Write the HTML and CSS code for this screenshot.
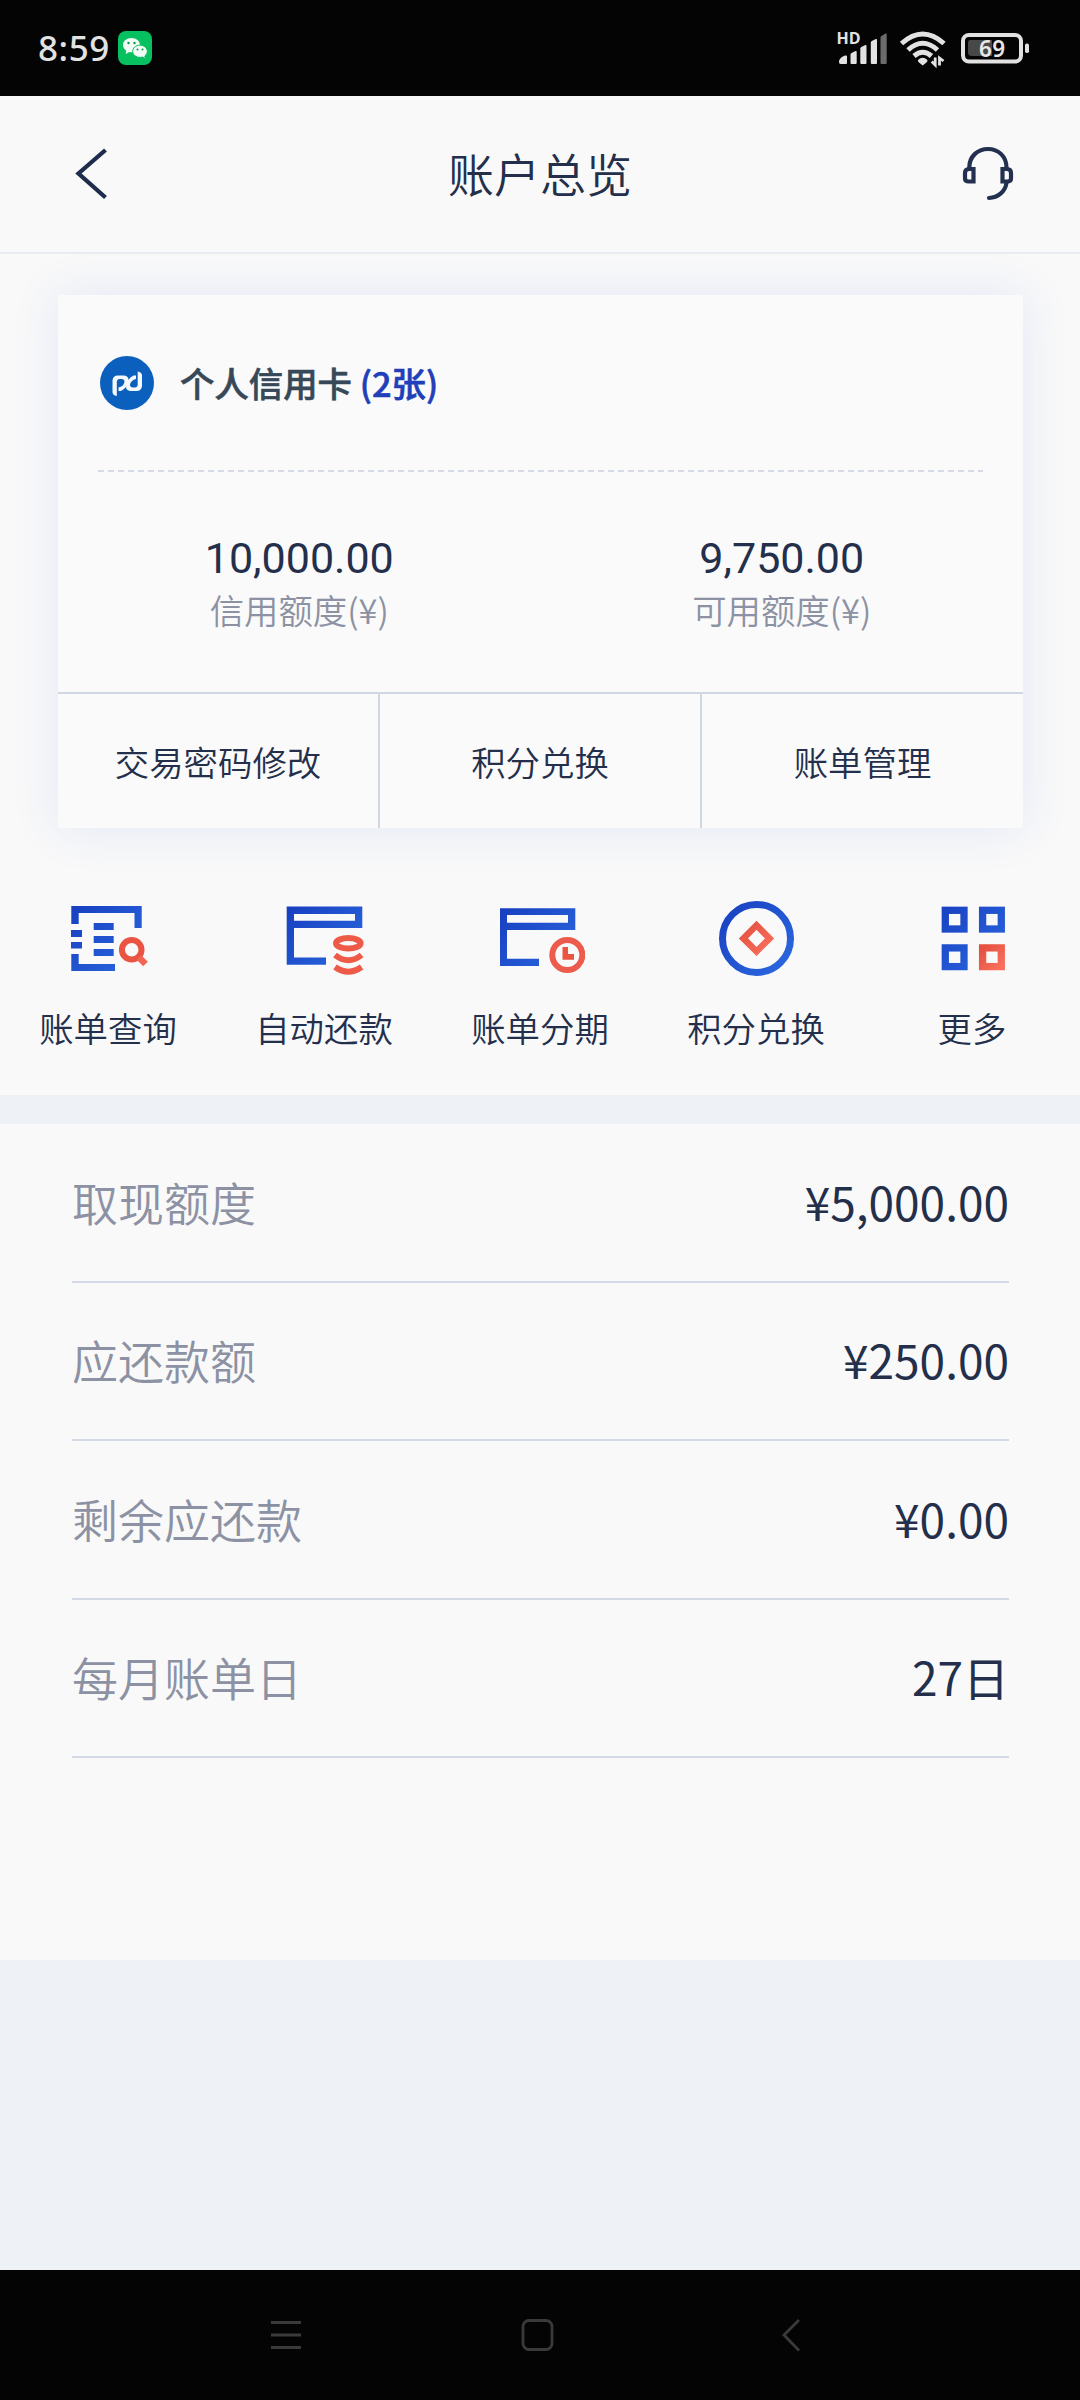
FILE: index.html
```html
<!DOCTYPE html>
<html lang="zh-CN">
<head>
<meta charset="utf-8">
<title>账户总览</title>
<link rel="stylesheet" href="styles.css">
</head>
<body>
<div class="screen">
  <div class="status">
    <div class="status-left">
      <span class="time">8:59</span>
      <svg class="wechat" viewBox="0 0 34 34">
        <rect width="34" height="34" rx="8" fill="#07c160"/>
        <path d="M13.500 7C8.700 7 5 10 5 14c0 2.300 1.200 4.200 3.200 5.500L7.800 23l3.500-2c.7.2 1.500.3 2.200.3 4.700 0 8.500-3.200 8.500-7.200S18.200 7 13.500 7z" fill="#f3fbf6"/>
        <path d="M22 14.200c-4.100 0-7.300 2.700-7.300 6.100s3.200 6.100 7.300 6.100c.9 0 1.700-.1 2.500-.4l3 1.800-.7-2.900c1.600-1.200 2.500-2.800 2.500-4.600 0-3.400-3.200-6.100-7.300-6.100z" fill="#f3fbf6" stroke="#07c160" stroke-width="1"/>
        <g fill="#07994b"><circle cx="10.500" cy="12" r="1.200"/><circle cx="16.500" cy="12" r="1.200"/><circle cx="19.500" cy="18.500" r="1"/><circle cx="24.500" cy="18.500" r="1"/></g>
      </svg>
    </div>
    <svg class="status-icons" viewBox="0 -10 196 48">
      <text class="hd" x="1.500" y="14">HD</text>
      <g fill="#e2e2e2">
        <path d="M4 32v-1q1-4 6-5.500h1q1 0 1 1V33q0 1-1 1H5.500Q4 34 4 32z"/>
        <path d="M15.500 24.500q0-1 1-1.500l4-2q1.200-.5 1.200 1V33q0 1-1 1h-4.200q-1 0-1-1z"/>
        <path d="M25.300 18.500q0-1 1-1.500l4-2q1.200-.5 1.200 1V33q0 1-1 1h-4.200q-1 0-1-1z"/>
        <path d="M35.800 12.500q0-1 1-1.500l4-2q1.200-.5 1.200 1V33q0 1-1 1h-4.200q-1 0-1-1z"/>
        <path fill="#6c6c6c" d="M45.500 7.500q0-1 1-1.500l4-2.500q1.200-.5 1.200 1V33q0 1-1 1h-4.200q-1 0-1-1z"/>
      </g>
      <g fill="none" stroke="#e2e2e2" stroke-width="5">
        <path d="M66.500 13.500Q87.700-5.500 109 13.500"/>
        <path d="M73 20Q87.700 6.500 102.500 20"/>
        <path d="M79 26Q87.700 18.500 96.500 26"/>
      </g>
      <path d="M83 30q4.700-4.500 9.400 0 .6 1.200-1 2.600L87.700 35.500 84 32.600Q82.400 31.200 83 30z" fill="#e2e2e2"/>
      <path d="M100.200 27.500v7.500l-3.500-3.500M104.500 35.500v-7.500l4 3" fill="none" stroke="#e2e2e2" stroke-width="2.800"/>
      <rect x="128" y="5" width="58" height="26.500" rx="6" fill="none" stroke="#e2e2e2" stroke-width="4"/>
      <path d="M135 10h22v16h-20q-4 0-4-3V13q0-3 2-3z" fill="#484848"/>
      <rect x="190" y="13.500" width="4" height="9.500" rx="1.800" fill="#e2e2e2"/>
      <text class="level" x="144" y="26.500" textLength="26">69</text>
    </svg>
  </div>

  <header class="header">
    <svg class="back" viewBox="0 0 40 60"><path d="M36.500 6 9.500 29.500 36.500 53.500" fill="none" stroke="#1e2d4d" stroke-width="4.300"/></svg>
    <h1 class="title">账户总览</h1>
    <svg class="service" viewBox="0 0 54 56" fill="none" stroke="#23304f" stroke-width="4.200">
      <path d="M8.300 23V21.500C8.300 10.500 16.500 3 27 3s18.500 7.500 18.500 18.500V23M45.500 37C44 46 37 51.500 28 52" stroke-linecap="round"/>
      <path d="M12.500 23H8Q4 23 4 27v5.500Q4 35.500 8 35.500h4.500zM41.500 23H46q4 0 4 4v5.500q0 3-4 3h-4.500z"/>
    </svg>
  </header>

  <section class="overview">
    <div class="card">
      <div class="card-head">
        <svg class="logo" viewBox="0 0 54 54">
          <circle cx="27" cy="27" r="27" fill="#0b60bd"/>
          <g fill="#f5f8fd">
            <path d="M12.500 36.500V24.500Q13 19.500 18 19.500H24Q29 20 28.500 25Q27 32 21 35H18.500V31.500Q23.500 30.500 24.500 26Q24.500 23 21.500 23H19.500Q16.800 23.300 16.800 26V40Q13 39.500 12.500 36.500z"/>
            <path d="M42 19V30Q41.500 35 36.500 35H30.500Q25.500 34.500 26 29.500Q27.500 22.500 33.500 19.500H36V23Q31 24 30 28.500Q30 31.500 33 31.500H35Q37.700 31.200 37.700 28.500V15.500Q41.500 16 42 19z"/>
          </g>
        </svg>
        <h2 class="card-title">个人信用卡 <span class="count">(2张)</span></h2>
      </div>
      <div class="dash"></div>
      <div class="amounts">
        <div class="amount"><span class="num">10,000.00</span><span class="cap">信用额度(¥)</span></div>
        <div class="amount"><span class="num">9,750.00</span><span class="cap">可用额度(¥)</span></div>
      </div>
      <div class="actions">
        <span class="action">交易密码修改</span>
        <span class="action">积分兑换</span>
        <span class="action">账单管理</span>
      </div>
    </div>
  </section>

  <nav class="menu">
    <div class="item">
      <svg class="icon" viewBox="0 0 90 80">
        <defs>
          <linearGradient id="blue" gradientUnits="userSpaceOnUse" x1="8" y1="8" x2="78" y2="72"><stop offset="0" stop-color="#173fc0"/><stop offset="1" stop-color="#2c68e0"/></linearGradient>
          <linearGradient id="red" x1="0" y1="0" x2="1" y2="1"><stop offset="0" stop-color="#e5503f"/><stop offset="1" stop-color="#f9705d"/></linearGradient>
        </defs>
        <path fill="url(#blue)" d="M8.300 8H78.700V30H71.500V15H15.700V26H8.300zM8.300 56H15.700V66H52V73H8.300zM8 32H19v7H8zM8 44H19v6.500H8zM30.700 25h20v7h-20zM30.700 38h20v7h-20zM30.700 51h20v7h-20z"/>
        <circle cx="68.700" cy="51.700" r="9.800" fill="none" stroke="#ea5443" stroke-width="6"/>
        <path d="M76 59.500 82.500 66" stroke="#f36553" stroke-width="6.500"/>
      </svg>
      <span class="label">账单查询</span>
    </div>
    <div class="item">
      <svg class="icon" viewBox="0 0 90 80">
        <path fill="url(#blue)" fill-rule="evenodd" d="M7.700 8.500H83.300V30H15V59.500H47V66.700H7.700zM15 16V22.700H76V16z"/>
        <g fill="none" stroke="#ee5a48" stroke-width="6"><ellipse cx="69.300" cy="45.300" rx="12.300" ry="5.200"/><path d="M56 57Q69.300 67.500 82.600 57M56 69Q69.300 78.500 82.600 69"/></g>
      </svg>
      <span class="label">自动还款</span>
    </div>
    <div class="item">
      <svg class="icon" viewBox="0 0 90 80">
        <path fill="url(#blue)" fill-rule="evenodd" d="M5 10.300H80.300V32H12V60.700H44V68H5zM12 17V24.700H73V17z"/>
        <circle cx="72.300" cy="57" r="15" fill="none" stroke="#ec5b4b" stroke-width="6"/>
        <path fill="#ea5443" d="M67.500 49H73v7h6v5.700H67.500z"/>
      </svg>
      <span class="label">账单分期</span>
    </div>
    <div class="item">
      <svg class="icon" viewBox="0 0 90 80">
        <circle cx="45.500" cy="40.400" r="34" fill="none" stroke="url(#blue)" stroke-width="7"/>
        <path d="M45.500 27.300 58.600 40.400 45.500 53.500 32.400 40.400z" fill="none" stroke="url(#red)" stroke-width="6.500"/>
      </svg>
      <span class="label">积分兑换</span>
    </div>
    <div class="item">
      <svg class="icon" viewBox="0 0 90 80" fill="none" stroke="url(#blue)" stroke-width="7.300">
        <rect x="18.300" y="12.300" width="18.700" height="18.700"/>
        <rect x="55.600" y="12.300" width="18.700" height="18.700"/>
        <rect x="18.300" y="49.900" width="18.700" height="18.700"/>
        <rect x="55.600" y="49.900" width="18.700" height="18.700" stroke="url(#red)"/>
      </svg>
      <span class="label">更多</span>
    </div>
  </nav>

  <section class="details">
    <div class="row"><span class="name">取现额度</span><span class="value">¥5,000.00</span></div>
    <div class="row"><span class="name">应还款额</span><span class="value">¥250.00</span></div>
    <div class="row"><span class="name">剩余应还款</span><span class="value">¥0.00</span></div>
    <div class="row"><span class="name">每月账单日</span><span class="value">27日</span></div>
  </section>

  <div class="navbar">
    <svg class="nav-icon" viewBox="0 0 40 40"><path d="M5 7.500H35M5 20H35M5 32.500H35" stroke="#3a3a3a" stroke-width="2.800"/></svg>
    <svg class="nav-icon" viewBox="0 0 40 40"><rect x="4" y="5.500" width="29" height="29" rx="6" fill="none" stroke="#3a3a3a" stroke-width="2.800"/></svg>
    <svg class="nav-icon" viewBox="0 0 40 40"><path d="M28 5 13 20 28 35.500" fill="none" stroke="#3a3a3a" stroke-width="2.800"/></svg>
  </div>
</div>
</body>
</html>
```
FILE: styles.css
```css
* { box-sizing: border-box; }
body { margin: 0; }
svg { display: block; flex: none; }

.screen {
  width: 1080px;
  height: 2400px;
  display: flex;
  flex-direction: column;
  background: #eef1f6;
  color: #232f4b;
  font-family: "Noto Sans CJK SC", sans-serif;
  font-weight: 350;
  overflow: hidden;
}

.status {
  height: 96px;
  padding: 0 49px 0 38px;
  display: flex;
  justify-content: space-between;
  background: #040404;
}
.status-left { display: flex; align-items: center; gap: 8px; }
.time {
  font: 500 35px/48px "Noto Sans", sans-serif;
  letter-spacing: 0.600px;
  color: #e2e2e2;
}
.wechat { width: 34px; height: 34px; }
.status-icons { width: 196px; height: 48px; margin-top: 20px; }
.hd { font: 700 16px "Open Sans", sans-serif; fill: #e2e2e2; }
.level { font: 600 22.500px "Noto Sans", sans-serif; fill: #e8e8e8; }

.header {
  height: 158px;
  padding: 0 65px 0 69px;
  display: grid;
  grid-template-columns: 56px 1fr 60px;
  align-items: center;
  background: #f9f9f9;
  border-bottom: 2px solid #e8ecf2;
}
.back { width: 40px; height: 60px; }
.service { width: 54px; height: 56px; justify-self: end; }
.title {
  margin: 0;
  padding-bottom: 4px;
  font-size: 46px;
  font-weight: 350;
  line-height: 66px;
  text-align: center;
}

.overview {
  height: 627px;
  padding: 41px 57px 0 58px;
  background: #f9f9f9;
  overflow: hidden;
}
.card {
  height: 533px;
  display: flex;
  flex-direction: column;
  background: #fafafa;
  border-radius: 3px;
  box-shadow: 0 0 48px 2px #e4e8f6;
}
.card-head {
  height: 175px;
  padding-left: 42px;
  display: flex;
  align-items: center;
  gap: 26px;
}
.logo { width: 54px; height: 54px; }
.card-title {
  margin: 0;
  padding-bottom: 2px;
  font-size: 34.400px;
  font-weight: 500;
  line-height: 50px;
  color: #374858;
  -webkit-text-stroke: 0.600px currentColor;
}
.count { color: #213fb8; }
.dash {
  height: 2px;
  margin: 0 40px;
  background: repeating-linear-gradient(90deg, #d6d9e6 0 6px, transparent 6px 10px);
}
.amounts {
  flex: 1;
  padding-top: 60px;
  display: grid;
  grid-template-columns: 1fr 1fr;
}
.amount { display: flex; flex-direction: column; align-items: center; }
.num { font: 400 43px/52px Roboto, sans-serif; }
.cap { font-size: 34.400px; line-height: 50px; color: #8c92a3; }
.actions {
  height: 136px;
  display: grid;
  grid-template-columns: 320px 322px 1fr;
  border-top: 2px solid #cfd8e2;
}
.action {
  display: flex;
  align-items: center;
  justify-content: center;
  padding-bottom: 1px;
  font-size: 34.400px;
}
.action + .action { border-left: 2px solid #cfd8e2; }

.menu {
  height: 214px;
  padding-top: 17px;
  display: grid;
  grid-template-columns: repeat(5, 1fr);
  background: #f9f9f9;
}
.item { display: flex; flex-direction: column; align-items: center; }
.icon { width: 90px; height: 80px; }
.label { margin-top: 24px; font-size: 34.400px; line-height: 50px; }

.details {
  height: 836px;
  margin-top: 29px;
  padding: 0 71px 0 72px;
  background: #f9f9f9;
}
.row {
  height: 158.500px;
  padding-bottom: 3px;
  display: flex;
  align-items: center;
  justify-content: space-between;
  border-bottom: 2px solid #d3d9e5;
  line-height: 66px;
}
.name { font-size: 46px; color: #8c92a3; }
.value { font-size: 46px; font-weight: 400; }

.navbar {
  height: 130px;
  margin-top: auto;
  padding: 0 269px 0 266px;
  display: flex;
  align-items: center;
  justify-content: space-between;
  background: #040404;
}
.nav-icon { width: 40px; height: 40px; }
```
